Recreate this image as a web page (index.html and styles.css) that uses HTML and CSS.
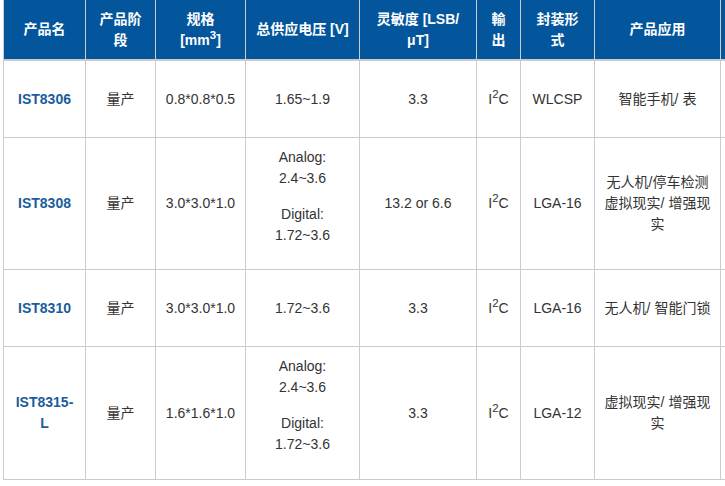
FILE: index.html
```html
<!DOCTYPE html>
<html lang="zh-CN">
<head>
<meta charset="utf-8">
<title>产品列表</title>
<link rel="stylesheet" href="styles.css">
</head>
<body>
<table class="spec">
  <colgroup>
    <col class="c1"><col class="c2"><col class="c3"><col class="c4"><col class="c5"><col class="c6"><col class="c7"><col class="c8"><col class="c9">
  </colgroup>
  <thead>
    <tr class="row-head">
      <th>产品名</th>
      <th>产品阶段</th>
      <th>规格<br>[mm<sup>3</sup>]</th>
      <th>总供应电压 [V]</th>
      <th>灵敏度 [LSB/ μT]</th>
      <th>輸出</th>
      <th>封装形式</th>
      <th>产品应用</th>
      <th></th>
    </tr>
  </thead>
  <tbody>
    <tr class="row-short">
      <td class="name">IST8306</td>
      <td>量产</td>
      <td>0.8*0.8*0.5</td>
      <td>1.65~1.9</td>
      <td>3.3</td>
      <td>I<sup>2</sup>C</td>
      <td>WLCSP</td>
      <td>智能手机/ 表</td>
      <td></td>
    </tr>
    <tr class="row-tall">
      <td class="name">IST8308</td>
      <td>量产</td>
      <td>3.0*3.0*1.0</td>
      <td><p>Analog:<br>2.4~3.6</p><p>Digital:<br>1.72~3.6</p></td>
      <td>13.2 or 6.6</td>
      <td>I<sup>2</sup>C</td>
      <td>LGA-16</td>
      <td>无人机/停车检测 虚拟现实/ 增强现实</td>
      <td></td>
    </tr>
    <tr class="row-short">
      <td class="name">IST8310</td>
      <td>量产</td>
      <td>3.0*3.0*1.0</td>
      <td>1.72~3.6</td>
      <td>3.3</td>
      <td>I<sup>2</sup>C</td>
      <td>LGA-16</td>
      <td>无人机/ 智能门锁</td>
      <td></td>
    </tr>
    <tr class="row-last">
      <td class="name">IST8315-L</td>
      <td>量产</td>
      <td>1.6*1.6*1.0</td>
      <td><p>Analog:<br>2.4~3.6</p><p>Digital:<br>1.72~3.6</p></td>
      <td>3.3</td>
      <td>I<sup>2</sup>C</td>
      <td>LGA-12</td>
      <td>虚拟现实/ 增强现实</td>
      <td></td>
    </tr>
  </tbody>
</table>
</body>
</html>
```

FILE: styles.css
```css
html, body {
  margin: 0;
  padding: 0;
  background: #ffffff;
  overflow: hidden;
}

body {
  font-family: "Liberation Sans", "Noto Sans CJK SC", sans-serif;
  font-size: 14px;
  line-height: 1.5;
  color: #333333;
}

.spec {
  margin-left: 3px;
  border-collapse: separate;
  border-spacing: 0;
  border-left: 1px solid #c8ccd0;
  table-layout: fixed;
  width: 818px;
}

.c1 { width: 82px; }
.c2 { width: 70px; }
.c3 { width: 90px; }
.c4 { width: 114px; }
.c5 { width: 117px; }
.c6 { width: 44px; }
.c7 { width: 74px; }
.c8 { width: 126px; }
.c9 { width: 101px; }

.spec th,
.spec td {
  box-sizing: border-box;
  padding: 8px 9px;
  text-align: center;
  vertical-align: middle;
  border-right: 1px solid #c8ccd0;
  border-bottom: 1px solid #c8ccd0;
}

.spec th {
  background: #03569b;
  color: #ffffff;
  font-weight: bold;
  border-bottom: 2px solid #c8ccd0;
}

.row-head { height: 61px; }
.row-short { height: 77px; }
.row-tall { height: 132px; }
.row-last { height: 133px; }

.spec td.name {
  color: #1a5d9c;
  font-weight: bold;
}

.spec p {
  margin: 0 0 15px;
}

.spec sup {
  font-size: 11.5px;
  line-height: 0;
}
```
